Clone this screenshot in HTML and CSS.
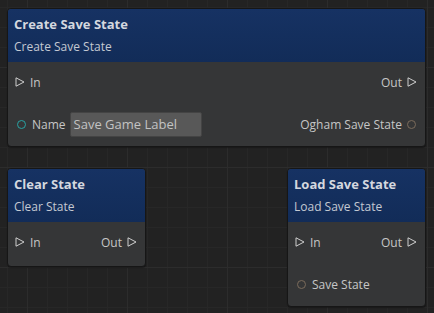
FILE: index.html
```html
<!DOCTYPE html>
<html>
<head>
<meta charset="utf-8">
<link rel="stylesheet" href="styles.css">
</head>
<body>
<div class="canvas">
  <div class="node node-create">
    <div class="node-header">
      <div class="node-title">Create Save State</div>
      <div class="node-sub">Create Save State</div>
    </div>
    <div class="node-body">
      <div class="row">
        <div class="pin"><svg class="tri" viewBox="0 0 10 10"><path d="M1 0.8 L9 5 L1 9.2 Z"/></svg><span>In</span></div>
        <div class="pin"><span>Out</span><svg class="tri" viewBox="0 0 10 10"><path d="M1 0.8 L9 5 L1 9.2 Z"/></svg></div>
      </div>
      <div class="row row-data">
        <div class="pin"><span class="dot dot-teal"></span><span>Name</span><div class="input">Save Game Label</div></div>
        <div class="pin"><span>Ogham Save State</span><span class="dot dot-brown"></span></div>
      </div>
    </div>
  </div>

  <div class="node node-clear">
    <div class="node-header">
      <div class="node-title">Clear State</div>
      <div class="node-sub">Clear State</div>
    </div>
    <div class="node-body">
      <div class="row">
        <div class="pin"><svg class="tri" viewBox="0 0 10 10"><path d="M1 0.8 L9 5 L1 9.2 Z"/></svg><span>In</span></div>
        <div class="pin"><span>Out</span><svg class="tri" viewBox="0 0 10 10"><path d="M1 0.8 L9 5 L1 9.2 Z"/></svg></div>
      </div>
    </div>
  </div>

  <div class="node node-load">
    <div class="node-header">
      <div class="node-title">Load Save State</div>
      <div class="node-sub">Load Save State</div>
    </div>
    <div class="node-body">
      <div class="row">
        <div class="pin"><svg class="tri" viewBox="0 0 10 10"><path d="M1 0.8 L9 5 L1 9.2 Z"/></svg><span>In</span></div>
        <div class="pin"><span>Out</span><svg class="tri" viewBox="0 0 10 10"><path d="M1 0.8 L9 5 L1 9.2 Z"/></svg></div>
      </div>
      <div class="row row-data">
        <div class="pin"><span class="dot dot-brown"></span><span>Save State</span></div>
      </div>
    </div>
  </div>
</div>
</body>
</html>
```
FILE: styles.css
```css
html, body {
  margin: 0;
  padding: 0;
  background: #222222;
}
.canvas {
  position: relative;
  width: 434px;
  height: 313px;
  overflow: hidden;
  font-family: "Open Sans", "DejaVu Sans", sans-serif;
  font-size: 12px;
  color: #c6c6c6;
  background-color: #222222;
  background-image:
    linear-gradient(to right, #2c2c2c 1px, transparent 1px),
    linear-gradient(to bottom, #2c2c2c 1px, transparent 1px),
    linear-gradient(to right, #272727 1px, transparent 1px),
    linear-gradient(to bottom, #272727 1px, transparent 1px);
  background-size: 100px 100px, 100px 100px, 20px 20px, 20px 20px;
  background-position: 27px 0, 0 67px, 7px 0, 0 7px;
}
.node {
  position: absolute;
  box-sizing: border-box;
  border: 1px solid #161616;
  border-radius: 4px;
  background: #353637;
  overflow: hidden;
  display: flex;
  flex-direction: column;
  box-shadow: 0 1px 1px rgba(0, 0, 0, 0.35);
}
.node-create { left: 7px; top: 8px; width: 419px; height: 139px; }
.node-clear { left: 7px; top: 168px; width: 139px; height: 99px; }
.node-load { left: 287px; top: 168px; width: 139px; height: 139px; }

.node-header {
  height: 53px;
  box-sizing: border-box;
  padding: 7px 6px 0 6px;
  background: linear-gradient(to bottom, #163263, #122c58);
  display: flex;
  flex-direction: column;
  gap: 7px;
}
.node-title {
  font-weight: bold;
  font-size: 13px;
  line-height: 16px;
  color: #d4d8df;
}
.node-sub {
  line-height: 16px;
  color: #c4c9d2;
}
.node-body {
  padding: 10px 8px 0 7px;
  display: flex;
  flex-direction: column;
  gap: 20px;
}
.row {
  display: flex;
  justify-content: space-between;
  align-items: center;
  height: 20px;
}
.row-data {
  height: 25px;
  padding-left: 2px;
}
.pin {
  display: flex;
  align-items: center;
  gap: 5px;
}
.tri {
  width: 10px;
  height: 10px;
  fill: none;
  stroke: #cfcfcf;
  stroke-width: 1;
}
.dot {
  width: 7px;
  height: 7px;
  border-radius: 50%;
  border: 1.5px solid;
  margin-right: 1px;
}
.dot-teal { border-color: #28a3a3; }
.dot-brown { border-color: #7b6b5b; }
.input {
  box-sizing: border-box;
  width: 132px;
  height: 25px;
  margin-left: -1px;
  padding: 0 3px;
  background: #585858;
  border: 1px solid #444;
  border-radius: 2px;
  font-size: 13px;
  line-height: 23px;
  color: #c3c3c3;
}
```
